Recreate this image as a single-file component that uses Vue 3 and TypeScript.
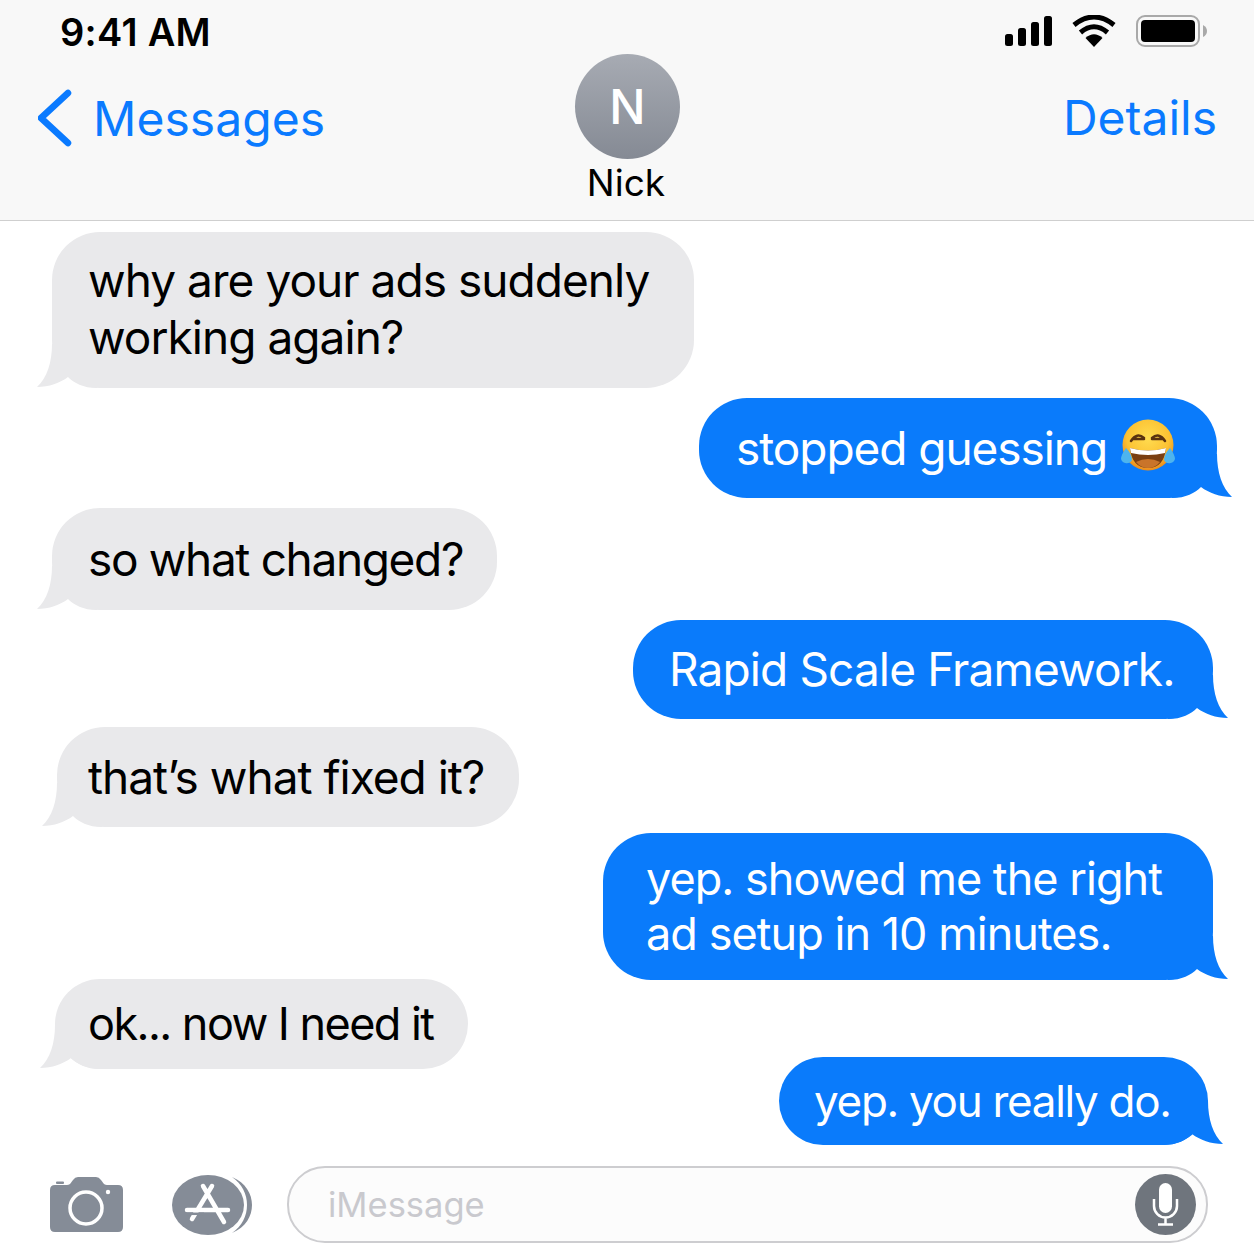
<template>
  <div class="phone">
    <header class="top">
      <div class="status">
        <span class="clock">9:41 AM</span>
        <div class="status-icons">
          <svg class="signal" width="47" height="30" viewBox="0 0 47 30">
            <rect x="0" y="18" width="8" height="12" rx="2.5" />
            <rect x="13" y="12" width="8" height="18" rx="2.5" />
            <rect x="26" y="6" width="8" height="24" rx="2.5" />
            <rect x="39" y="0" width="8" height="30" rx="2.5" />
          </svg>
          <svg class="wifi" width="44" height="32" viewBox="0 0 44 32">
            <path d="M22 32 L13.5 23 Q22 15.5 30.500 23 Z" fill="#000" />
            <path d="M8.500 17.500 Q22 6 35.500 17.500" fill="none" stroke="#000" stroke-width="5" />
            <path d="M2 10 Q22 -6 42 10" fill="none" stroke="#000" stroke-width="5" />
          </svg>
          <svg class="battery" width="71" height="32" viewBox="0 0 71 32">
            <rect x="1" y="1" width="62" height="30" rx="8" fill="none" stroke="#a9a9a9" stroke-width="2" />
            <rect x="5" y="5" width="54" height="22" rx="4" fill="#000" />
            <path d="M67 10 Q71 12 71 16 Q71 20 67 22 Z" fill="#a9a9a9" />
          </svg>
        </div>
      </div>
      <nav class="nav">
        <a class="back">
          <svg width="36" height="58" viewBox="0 0 36 58">
            <path d="M30 4 L3 29 L30 54" fill="none" stroke="#0a7aff" stroke-width="6.500" stroke-linecap="round" stroke-linejoin="round" />
          </svg>
          <span>Messages</span>
        </a>
        <div class="contact">
          <div class="avatar">N</div>
          <div class="name">Nick</div>
        </div>
        <a class="details">Details</a>
      </nav>
    </header>

    <main class="thread">
      <div
        v-for="(m, i) in messages"
        :key="i"
        class="bubble"
        :class="m.mine ? 'mine' : 'theirs'"
        :style="bubbleStyle(m)"
      >
        <svg class="tail" width="60" height="64" viewBox="0 0 60 64">
          <path d="M15 20 C15 38 10 54 0 63 C12 63 23 59 31 53 C37 59 46 64 60 64 L60 20 Z" />
        </svg>
        <div v-for="line in m.lines" :key="line" class="line" :style="{ letterSpacing: m.spacing + 'px', fontSize: m.size + 'px' }">{{ line }}</div>
        <svg v-if="m.emoji" class="emoji" width="56" height="56" viewBox="0 0 56 56">
          <defs>
            <radialGradient id="face" cx="50%" cy="36%" r="64%">
              <stop offset="0" stop-color="#ffdc50" />
              <stop offset="0.65" stop-color="#fcc233" />
              <stop offset="1" stop-color="#e98a1c" />
            </radialGradient>
          </defs>
          <circle cx="28" cy="27" r="25.500" fill="url(#face)" />
          <path d="M11 23 Q17 14 24 20 M13 21 L24 21" fill="none" stroke="#5a3210" stroke-width="2.500" stroke-linecap="round" />
          <path d="M45 23 Q39 14 32 20 M43 21 L32 21" fill="none" stroke="#5a3210" stroke-width="2.500" stroke-linecap="round" />
          <path d="M10 30 Q28 35 46 30 Q44 50 28 50 Q12 50 10 30 Z" fill="#7a3f12" />
          <path d="M16 44 Q28 38 40 44 Q35 50 28 50 Q21 50 16 44 Z" fill="#c9742a" />
          <path d="M10 30 Q28 35 46 30 L45 35 Q28 39 11 35 Z" fill="#fff" />
          <path d="M6 30 Q1 37 1 41 A6 6 0 0 0 12 42 Q12 36 6 30 Z" fill="#4db4ee" />
          <path d="M50 30 Q55 37 55 41 A6 6 0 0 1 44 42 Q44 36 50 30 Z" fill="#4db4ee" />
        </svg>
      </div>
    </main>

    <footer class="composer">
      <svg class="camera" width="74" height="56" viewBox="0 0 74 56">
        <path d="M5 8 H17 Q20 8 21.500 5 L23 3 Q25 0 28 0 H46 Q49 0 51 3 L52.500 5 Q54 8 57 8 H68 Q73 8 73 13 V50 Q73 55 68 55 H5 Q0 55 0 50 V13 Q0 8 5 8 Z" fill="#858c97" />
        <rect x="6" y="4.500" width="8" height="2.500" rx="1" fill="#858c97" />
        <circle cx="36" cy="31" r="16" fill="none" stroke="#fff" stroke-width="3.500" />
        <circle cx="58" cy="15" r="2.200" fill="#fff" />
      </svg>
      <svg class="store" width="81" height="62" viewBox="0 0 81 62">
        <path d="M60 3 C74 9 80 20 80 31 C80 42 74 53 60 59 C70 52 75 42 75 31 C75 20 70 10 60 3 Z" fill="#858c97" />
        <ellipse cx="36" cy="31" rx="36" ry="30" fill="#858c97" />
        <path d="M40 12 L20 45 M31 12 L52 48 M15 36 H56" fill="none" stroke="#fff" stroke-width="4.500" stroke-linecap="round" />
        <path d="M14 39.800 H32" fill="none" stroke="#858c97" stroke-width="2.500" />
      </svg>
      <div class="field">
        <span class="placeholder">iMessage</span>
        <svg class="mic" width="61" height="61" viewBox="0 0 61 61">
          <circle cx="30.500" cy="30.500" r="30.500" fill="#6f757d" />
          <rect x="24" y="9" width="13" height="30" rx="6.500" fill="#fff" />
          <path d="M19 25 V32 A11.500 11.500 0 0 0 42 32 V25 M30.500 44 V50 M23 50.500 H38" fill="none" stroke="#fff" stroke-width="2.500" />
        </svg>
      </div>
    </footer>
  </div>
</template>

<script setup lang="ts">
interface Message {
  mine: boolean
  lines: string[]
  gap: number
  inset: number
  width: number
  height: number
  pad: number
  lineHeight: number
  size: number
  spacing: number
  emoji?: boolean
}

const messages: Message[] = [
  { mine: false, lines: ['why are your ads suddenly', 'working again?'], gap: 0, inset: 52, width: 642, height: 156, pad: 36, lineHeight: 57, size: 46, spacing: -0.96 },
  { mine: true, lines: ['stopped guessing'], gap: 10, inset: 37, width: 518, height: 100, pad: 37, lineHeight: 100, size: 46, spacing: -1.06, emoji: true },
  { mine: false, lines: ['so what changed?'], gap: 10, inset: 52, width: 445, height: 102, pad: 36, lineHeight: 102, size: 46, spacing: -1.35 },
  { mine: true, lines: ['Rapid Scale Framework.'], gap: 10, inset: 41, width: 580, height: 99, pad: 36, lineHeight: 99, size: 46, spacing: -0.87 },
  { mine: false, lines: ['that’s what fixed it?'], gap: 8, inset: 57, width: 462, height: 100, pad: 31, lineHeight: 100, size: 46, spacing: -1 },
  { mine: true, lines: ['yep. showed me the right', 'ad setup in 10 minutes.'], gap: 6, inset: 41, width: 610, height: 147, pad: 43, lineHeight: 55, size: 45, spacing: -0.95 },
  { mine: false, lines: ['ok... now I need it'], gap: -1, inset: 55, width: 413, height: 90, pad: 33, lineHeight: 90, size: 45, spacing: -1.56 },
  { mine: true, lines: ['yep. you really do.'], gap: -12, inset: 46, width: 429, height: 88, pad: 35, lineHeight: 88, size: 44, spacing: -1.3 },
]

function bubbleStyle(m: Message) {
  return {
    marginTop: m.gap + 'px',
    width: m.width + 'px',
    height: m.height + 'px',
    paddingLeft: m.pad + 'px',
    lineHeight: m.lineHeight + 'px',
    paddingTop: (m.height - m.lineHeight * m.lines.length) / 2 - 1 + 'px',
    [m.mine ? 'marginRight' : 'marginLeft']: m.inset + 'px',
  }
}
</script>

<style>
html,
body {
  margin: 0;
  background: #fff;
}
</style>

<style scoped>
.phone {
  width: 1254px;
  height: 1254px;
  display: flex;
  flex-direction: column;
  overflow: hidden;
  background: #fff;
  font-family: Inter, "Liberation Sans", sans-serif;
}
.top {
  height: 220px;
  flex: none;
  background: #f8f8f8;
  border-bottom: 1px solid #cfcfcf;
}
.status {
  height: 54px;
  display: flex;
  justify-content: space-between;
  padding: 0 47px 0 60px;
}
.clock {
  font-size: 38px;
  font-weight: 600;
  line-height: 64px;
  letter-spacing: 0.3px;
  color: #000;
}
.status-icons {
  display: flex;
  align-items: flex-start;
  padding-top: 15px;
  gap: 20px;
}
.signal {
  margin-top: 1px;
  fill: #000;
}
.nav {
  display: grid;
  grid-template-columns: 1fr auto 1fr;
  padding: 0 37px 0 38px;
}
.back {
  display: flex;
  align-items: center;
  gap: 19px;
  height: 128px;
  color: #0a7aff;
  font-size: 48px;
  letter-spacing: 0.05px;
}
.back svg {
  flex: none;
}
.details {
  justify-self: end;
  height: 128px;
  line-height: 128px;
  color: #0a7aff;
  font-size: 48px;
}
.contact {
  display: flex;
  flex-direction: column;
  align-items: center;
}
.avatar {
  width: 105px;
  height: 105px;
  border-radius: 50%;
  background: linear-gradient(#a7abb3, #858a94);
  color: #fff;
  font-size: 48px;
  font-weight: 500;
  line-height: 105px;
  text-align: center;
}
.name {
  margin-right: 3px;
  font-size: 37px;
  line-height: 48px;
  color: #000;
}
.thread {
  flex: 1;
  display: flex;
  flex-direction: column;
  padding-top: 11px;
}
.bubble {
  position: relative;
  box-sizing: border-box;
  border-radius: 48px;
  white-space: nowrap;
}
.line {
  position: relative;
}
.theirs {
  align-self: flex-start;
  background: #e9e9eb;
  color: #000;
}
.mine {
  align-self: flex-end;
  background: #0a7bfb;
  color: #fff;
}
.tail {
  position: absolute;
  bottom: 0;
}
.theirs .tail {
  left: -15px;
  fill: #e9e9eb;
}
.mine .tail {
  right: -15px;
  fill: #0a7bfb;
  transform: scaleX(-1);
}
.emoji {
  position: absolute;
  left: 421px;
  top: 20px;
}
.composer {
  flex: none;
  display: flex;
  align-items: center;
  height: 77px;
  padding: 0 46px 11px 50px;
}
.camera {
  flex: none;
}
.store {
  flex: none;
  margin-left: 48px;
}
.field {
  flex: 1;
  height: 77px;
  margin-left: 34px;
  box-sizing: border-box;
  display: flex;
  align-items: center;
  justify-content: space-between;
  padding: 0 10px 0 39px;
  border: 2px solid #cdcdd0;
  border-radius: 38px;
  background: #fcfcfc;
}
.placeholder {
  font-size: 34.500px;
  color: #c9c9ce;
}
</style>
